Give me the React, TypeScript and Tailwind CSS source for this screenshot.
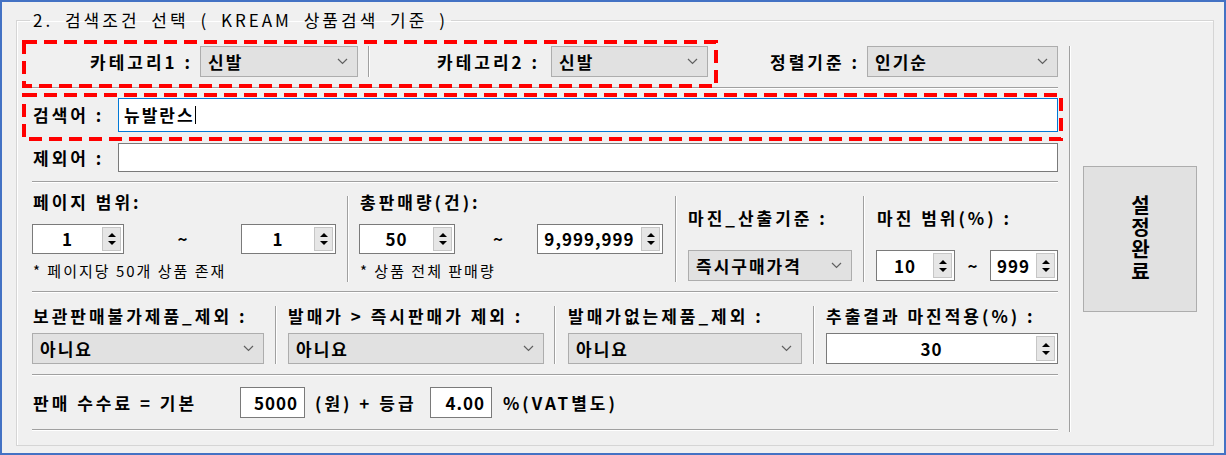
const LABEL = 'text-[17px] font-bold tracking-[3px] leading-[20px] whitespace-nowrap'
const NOTE = 'text-[15px] tracking-[2px] leading-[20px] whitespace-nowrap'

function Chevron() {
  return (
    <svg width="11" height="7" viewBox="0 0 11 7" className="shrink-0">
      <polyline points="1,1 5.5,5.5 10,1" fill="none" stroke="#606060" strokeWidth="1.2" />
    </svg>
  )
}

function Combo({ value, className }: { value: string; className: string }) {
  return (
    <div
      className={`flex items-center justify-between bg-[#e1e1e1] border border-[#adadad] pl-[7px] pr-[9px] text-[17px] font-bold tracking-[2px] leading-[20px] ${className}`}
    >
      <span className="whitespace-nowrap">{value}</span>
      <Chevron />
    </div>
  )
}

function SpinArrows() {
  return (
    <div className="flex flex-col items-center justify-center gap-[4px] w-[19px] my-[2px] mr-[2px] bg-[#e6e6e6] border border-[#c6c6c6]">
      <div className="w-0 h-0 border-x-[4px] border-x-transparent border-b-[4px] border-b-black" />
      <div className="w-0 h-0 border-x-[4px] border-x-transparent border-t-[4px] border-t-black" />
    </div>
  )
}

function Spin({ value, className }: { value: string; className: string }) {
  return (
    <div className={`flex border border-[#7a7a7a] bg-white ${className}`}>
      <span className="flex-1 flex items-center justify-center text-[17px] font-bold tracking-[1px] leading-[20px] whitespace-nowrap">
        {value}
      </span>
      <SpinArrows />
    </div>
  )
}

function Hr({ className }: { className: string }) {
  return <div className={`h-0 border-t border-t-[#a0a0a0] border-b border-b-white ${className}`} />
}

function VSep({ className }: { className: string }) {
  return <div className={`w-0 shrink-0 border-l border-l-[#a0a0a0] border-r border-r-white ${className}`} />
}

export default function App() {
  return (
    <div className="w-[1226px] h-[455px] overflow-hidden bg-[#f0f0f0] border-2 border-[#4472c4] text-black font-['Noto_Sans_CJK_KR',sans-serif]">
      <fieldset className="ml-[14px] mt-[8px] w-[1198px] h-[436px] border border-[#d5d5d5] shadow-[inset_1px_1px_0_#fff]">
        <legend className="ml-[13px] px-[3px] h-[20px] leading-[20px] text-[17px] tracking-[3px] [word-spacing:5px] whitespace-nowrap">
          2. 검색조건 선택 ( KREAM 상품검색 기준 )
        </legend>

        <div className="flex pl-[5px] pt-[10px]">
          {/* left column */}
          <div className="relative w-[1041px] flex flex-col pl-[10px] pr-[5px]">
            {/* row: categories / sort */}
            <div className="flex items-center h-[31px] mt-[6px]">
              <div className="flex items-center justify-end gap-[7px] w-[326px]">
                <span className={LABEL}>카테고리1 :</span>
                <Combo value="신발" className="w-[158px] h-[31px]" />
              </div>
              <VSep className="ml-[10px] h-[31px]" />
              <div className="flex items-center justify-end gap-[11px] w-[338px]">
                <span className={LABEL}>카테고리2 :</span>
                <Combo value="신발" className="w-[157px] h-[31px]" />
              </div>
              <div className="flex items-center justify-end gap-[7px] w-[350px]">
                <span className={LABEL}>정렬기준 :</span>
                <Combo value="인기순" className="w-[191px] h-[31px]" />
              </div>
            </div>
            <Hr className="mt-[10px]" />

            {/* 검색어 */}
            <div className="flex items-center mt-[9px] h-[34px]">
              <span className={`${LABEL} w-[86px] pl-[1px]`}>검색어 :</span>
              <div className="flex-1 h-full flex items-center pl-[5px] bg-white border border-[#0078d7] text-[17px] font-bold tracking-[2px] leading-[20px]">
                뉴발란스
                <span className="w-[1px] h-[18px] bg-black" />
              </div>
            </div>

            {/* 제외어 */}
            <div className="flex items-center mt-[11px] h-[29px]">
              <span className={`${LABEL} w-[86px] pl-[1px]`}>제외어 :</span>
              <div className="flex-1 h-full bg-white border border-[#7a7a7a]" />
            </div>
            <Hr className="mt-[9px]" />

            {/* ranges */}
            <div className="flex items-start h-[108px]">
              <div className="flex flex-col w-[315px]">
                <span className={`${LABEL} pt-[9px] pl-[1px]`}>페이지 범위:</span>
                <div className="flex items-center justify-between w-[304px] mt-[12px]">
                  <Spin value="1" className="w-[92px] h-[30px]" />
                  <span className="font-bold text-[17px]">~</span>
                  <Spin value="1" className="w-[95px] h-[30px]" />
                </div>
                <span className={`${NOTE} mt-[7px] pl-[1px]`}>* 페이지당 50개 상품 존재</span>
              </div>
              <VSep className="mt-[13px] h-[86px]" />
              <div className="flex flex-col ml-[10px] w-[304px]">
                <span className={`${LABEL} pt-[9px] pl-[1px]`}>총판매량(건):</span>
                <div className="flex items-center justify-between w-[304px] mt-[12px]">
                  <Spin value="50" className="w-[96px] h-[30px]" />
                  <span className="font-bold text-[17px] pl-[4px]">~</span>
                  <Spin value="9,999,999" className="w-[126px] h-[30px]" />
                </div>
                <span className={`${NOTE} mt-[7px] pl-[1px]`}>* 상품 전체 판매량</span>
              </div>
              <VSep className="ml-[12px] mt-[13px] h-[86px]" />
              <div className="flex flex-col ml-[11px] w-[164px]">
                <span className={`${LABEL} pt-[25px]`}>마진_산출기준 :</span>
                <Combo value="즉시구매가격" className="w-[164px] h-[31px] mt-[22px]" />
              </div>
              <VSep className="ml-[11px] mt-[13px] h-[86px]" />
              <div className="flex flex-col ml-[11px] w-[182px]">
                <span className={`${LABEL} pt-[25px] pl-[1px]`}>마진 범위(%) :</span>
                <div className="flex items-center justify-between mt-[22px]">
                  <Spin value="10" className="w-[79px] h-[31px]" />
                  <span className="font-bold text-[17px]">~</span>
                  <Spin value="999" className="w-[68px] h-[31px]" />
                </div>
              </div>
            </div>
            <Hr className="" />

            {/* exclusions */}
            <div className="flex items-start h-[81px]">
              <div className="flex flex-col w-[232px]">
                <span className={`${LABEL} pt-[13px] pl-[1px]`}>보관판매불가제품_제외 :</span>
                <Combo value="아니요" className="w-[232px] h-[31px] mt-[7px] pl-[6px]" />
              </div>
              <VSep className="ml-[11px] mt-[13px] h-[58px]" />
              <div className="flex flex-col ml-[11px] w-[256px]">
                <span className={`${LABEL} pt-[13px]`}>발매가 &gt; 즉시판매가 제외 :</span>
                <Combo value="아니요" className="w-[256px] h-[31px] mt-[7px] pl-[6px]" />
              </div>
              <VSep className="ml-[10px] mt-[13px] h-[58px]" />
              <div className="flex flex-col ml-[12px] w-[234px]">
                <span className={`${LABEL} pt-[13px]`}>발매가없는제품_제외 :</span>
                <Combo value="아니요" className="w-[234px] h-[31px] mt-[7px] pl-[6px]" />
              </div>
              <VSep className="ml-[11px] mt-[13px] h-[58px]" />
              <div className="flex flex-col ml-[11px] w-[232px]">
                <span className={`${LABEL} pt-[13px]`}>추출결과 마진적용(%) :</span>
                <Spin value="30" className="w-[232px] h-[31px] mt-[7px]" />
              </div>
            </div>
            <Hr className="" />

            {/* fee */}
            <div className="flex items-center mt-[11px] h-[31px]">
              <span className={`${LABEL} w-[208px] pl-[1px]`}>판매 수수료 = 기본</span>
              <div className="w-[65px] h-full flex items-center justify-end pr-[6px] bg-white border border-[#7a7a7a] text-[17px] font-bold tracking-[1px]">
                5000
              </div>
              <span className={`${LABEL} w-[125px] pl-[10px]`}>(원) + 등급</span>
              <div className="w-[62px] h-full flex items-center justify-end pr-[6px] bg-white border border-[#7a7a7a] text-[17px] font-bold tracking-[1px]">
                4.00
              </div>
              <span className={`${LABEL} ml-[11px]`}>%(VAT별도)</span>
            </div>
            <Hr className="mt-[11px]" />

            {/* annotation boxes */}
            <svg className="absolute left-0 top-0 z-10 pointer-events-none" width="1041" height="102">
              <rect x="2" y="2" width="692" height="44" fill="none" stroke="#ff0000" strokeWidth="4" strokeDasharray="13 7" />
              <rect x="2" y="55" width="1037" height="44" fill="none" stroke="#ff0000" strokeWidth="4" strokeDasharray="13 7" />
            </svg>
          </div>

          <VSep className="ml-[6px] mt-[6px] h-[386px]" />

          <button className="ml-[12px] mt-[126px] w-[114px] h-[146px] flex items-center justify-center bg-[#e1e1e1] border border-[#adadad]">
            <span className="[writing-mode:vertical-rl] [text-orientation:upright] text-[20px] font-bold tracking-[2px] leading-[24px]">
              설정완료
            </span>
          </button>
        </div>
      </fieldset>
    </div>
  )
}
